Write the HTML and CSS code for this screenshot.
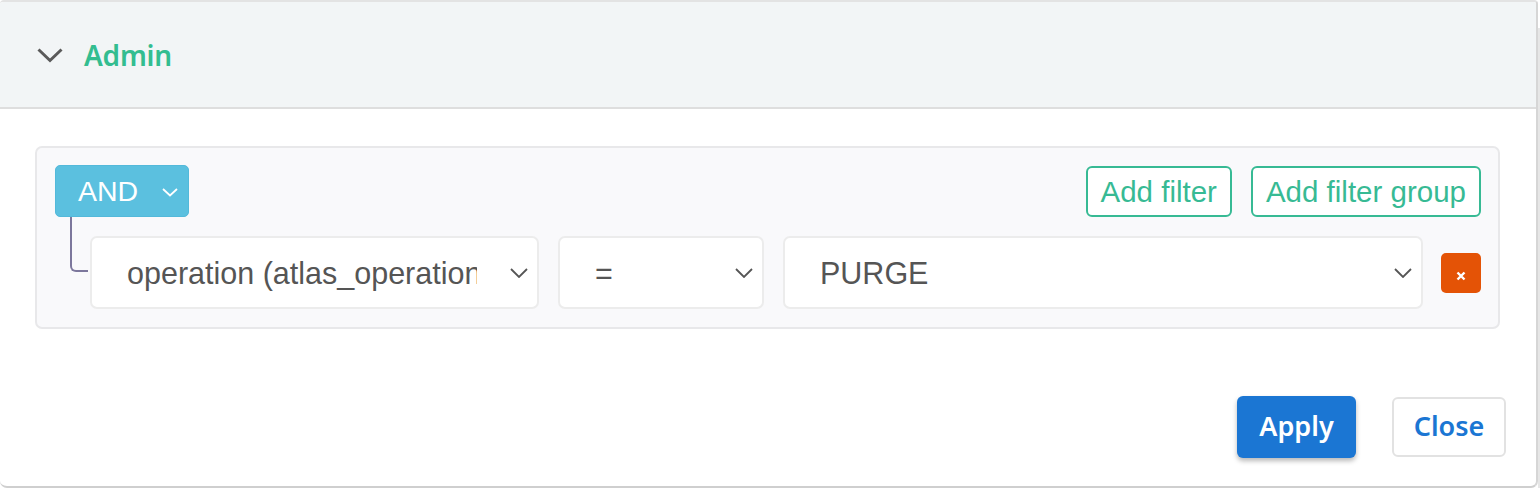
FILE: index.html
```html
<!DOCTYPE html>
<html>
<head>
<meta charset="utf-8">
<link rel="stylesheet" href="styles.css">
</head>
<body>
<div class="page">
  <div class="panel">
    <div class="panel-header">
      <svg class="hdr-chevron" width="26" height="15" viewBox="0 0 26 15"><path d="M1.5 1.5 L13 12.5 L24.5 1.5" fill="none" stroke="#5a5a5a" stroke-width="3"/></svg>
      <span class="hdr-title">Admin</span>
    </div>
    <div class="panel-body">
      <div class="group">
        <div class="group-top">
          <button class="and-btn">AND
            <svg class="and-chev" width="16" height="9" viewBox="0 0 16 9"><path d="M1 1 L8 7.5 L15 1" fill="none" stroke="#fff" stroke-width="1.8"/></svg>
          </button>
          <div class="group-actions">
            <button class="outline-btn">Add filter</button>
            <button class="outline-btn">Add filter group</button>
          </div>
        </div>
        <div class="rule">
          <div class="connector"></div>
          <div class="select sel-field">
            <span class="sel-text">operation (atlas_operation)</span>
            <svg class="sel-chev" width="18" height="10" viewBox="0 0 18 10"><path d="M1 1 L9 9 L17 1" fill="none" stroke="#555" stroke-width="1.8"/></svg>
          </div>
          <div class="select sel-op">
            <span class="sel-text">=</span>
            <svg class="sel-chev" width="18" height="10" viewBox="0 0 18 10"><path d="M1 1 L9 9 L17 1" fill="none" stroke="#555" stroke-width="1.8"/></svg>
          </div>
          <div class="select sel-value">
            <span class="sel-text">PURGE</span>
            <svg class="sel-chev" width="18" height="10" viewBox="0 0 18 10"><path d="M1 1 L9 9 L17 1" fill="none" stroke="#555" stroke-width="1.8"/></svg>
          </div>
          <button class="del-btn"><svg width="10" height="10" viewBox="0 0 10 10"><path d="M1.5 1.5 L8.5 8.5 M8.5 1.5 L1.5 8.5" stroke="#fff" stroke-width="2.4"/></svg></button>
        </div>
      </div>
      <div class="footer">
        <button class="apply-btn">Apply</button>
        <button class="close-btn">Close</button>
      </div>
    </div>
  </div>
  <div class="scrollbar"><div class="thumb"></div></div>
</div>
</body>
</html>
```
FILE: styles.css
```css
html, body {
  margin: 0;
  padding: 0;
  background: #ffffff;
}
.page {
  display: flex;
  width: 1540px;
  height: 488px;
  overflow: hidden;
}
.panel {
  width: 1536px;
  border-top: 2px solid #e3e3e3;
  border-right: 2px solid #d6d6d6;
  border-bottom: 2px solid #cfcfcf;
  border-radius: 4px 4px 7px 7px;
  box-sizing: content-box;
  display: flex;
  flex-direction: column;
  background: #fff;
  height: 484px;
  overflow: hidden;
}
.scrollbar {
  width: 2px;
  padding-top: 28px;
  display: flex;
  flex-direction: column;
}
.scrollbar .thumb {
  flex: 1;
  background: #e6e6e6;
  border-top: 20px solid #e6e6e6;
}
.panel-header {
  height: 105px;
  background: #f2f5f6;
  border-bottom: 2px solid #dedede;
  display: flex;
  align-items: center;
  padding-left: 37px;
  flex-shrink: 0;
}
.hdr-chevron {
  display: block;
  margin-top: 1px;
}
.hdr-title {
  margin-left: 21px;
  font-family: "Noto Sans", sans-serif;
  font-weight: 600;
  font-size: 28px;
  color: #33bd90;
  letter-spacing: -0.2px;
}
.panel-body {
  flex: 1;
  display: flex;
  flex-direction: column;
}
.group {
  margin: 37px 36px 0 35px;
  background: #f9f9fb;
  border: 2px solid #e8e8ea;
  border-radius: 7px;
  padding: 17px 17px 18px 18px;
  font-family: "Liberation Sans", Arial, sans-serif;
}
.group-top {
  display: flex;
  justify-content: space-between;
  align-items: flex-start;
}
button {
  font-family: inherit;
  cursor: pointer;
}
.and-btn {
  height: 52px;
  width: 134px;
  background: #5bc0df;
  border: 1px solid #53b9da;
  border-radius: 5px;
  color: #fff;
  font-size: 28.5px;
  display: flex;
  align-items: center;
  padding: 0 0 0 22px;
  margin: 0;
}
.and-chev {
  margin-left: 24px;
  margin-top: 2px;
}
.group-actions {
  display: flex;
  gap: 19px;
  padding-top: 1px;
}
.outline-btn {
  height: 51px;
  background: #fff;
  border: 2px solid #37ba94;
  border-radius: 6px;
  color: #37ba94;
  font-size: 29.5px;
  padding: 0 13px;
  margin: 0;
}
.rule {
  display: flex;
  align-items: center;
  margin-top: 19px;
}
.connector {
  align-self: flex-start;
  width: 16px;
  height: 53px;
  margin-top: -19px;
  margin-left: 15px;
  margin-right: 2px;
  border-left: 2px solid #7c779c;
  border-bottom: 2px solid #7c779c;
  border-bottom-left-radius: 6px;
  flex-shrink: 0;
}
.select {
  height: 69px;
  background: #fff;
  border: 2px solid #ececec;
  border-radius: 7px;
  display: flex;
  align-items: center;
  padding: 0 9px 0 35px;
  color: #555;
  font-size: 30.5px;
  box-sizing: content-box;
  flex-shrink: 0;
}
.sel-text {
  flex: 1;
  white-space: nowrap;
  overflow: hidden;
  margin-right: 33px;
  padding-top: 1px;
}
.sel-chev {
  flex-shrink: 0;
  margin-top: 1px;
}
.sel-field { width: 401px; }
.sel-op { width: 158px; margin-left: 19px; }
.sel-value { width: 592px; margin-left: 19px; }
.del-btn {
  width: 40px;
  height: 40px;
  margin: 0 0 0 18px;
  padding: 6px 0 0 0;
  background: #e45306;
  border: none;
  border-radius: 5px;
  display: flex;
  align-items: center;
  justify-content: center;
}
.footer {
  display: flex;
  justify-content: flex-end;
  align-items: center;
  gap: 36px;
  margin-top: 67px;
  padding-right: 30px;
  font-family: "Noto Sans", sans-serif;
}
.apply-btn {
  width: 119px;
  height: 62px;
  background: #1b76d3;
  color: #fff;
  border: none;
  border-radius: 6px;
  box-shadow: 0 3px 5px rgba(0, 0, 0, 0.28);
  font-family: "Noto Sans", sans-serif;
  font-weight: 600;
  font-size: 27px;
  margin: 0;
  padding: 0 0 4px 0;
}
.close-btn {
  width: 114px;
  height: 60px;
  background: #fff;
  color: #1b76d3;
  border: 2px solid #e2e2e2;
  border-radius: 6px;
  font-family: "Noto Sans", sans-serif;
  font-weight: 600;
  font-size: 27px;
  margin: 0;
  padding: 0 0 4px 0;
}
```
